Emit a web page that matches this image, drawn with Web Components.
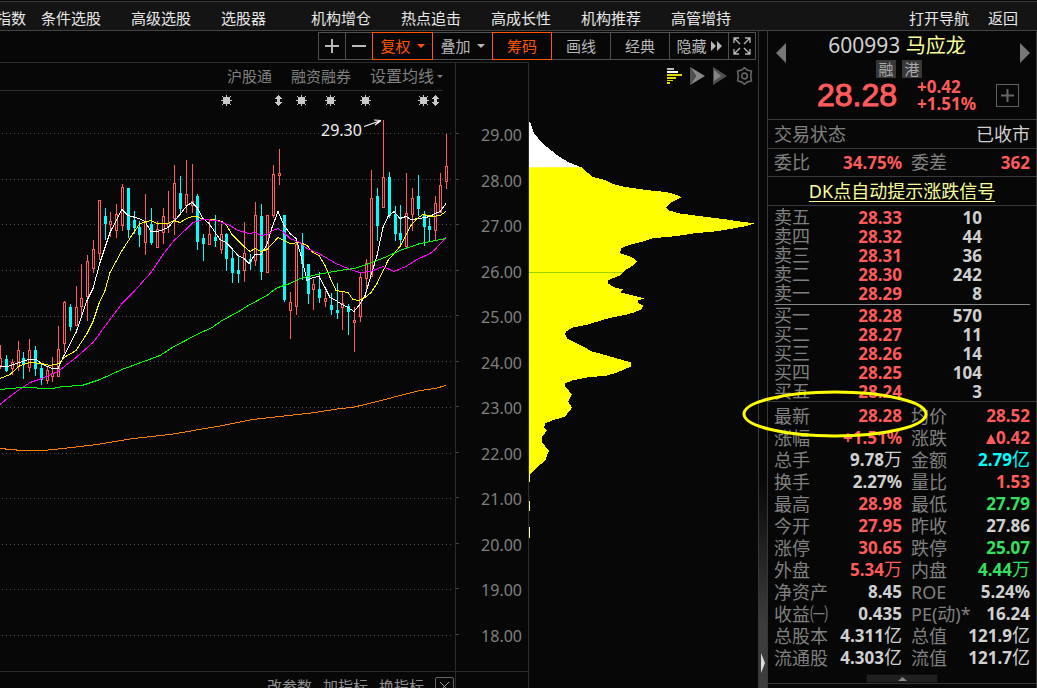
<!DOCTYPE html>
<html lang="zh-CN">
<head>
<meta charset="utf-8">
<title>600993 马应龙</title>
<style>
html, body { margin: 0; height: 100%; background: #070707; overflow: hidden; }
body { font-family: "Noto Sans", "Noto Sans CJK SC", sans-serif; font-size: 15px; color: #ccc; }
</style>
</head>
<body>
<stock-app></stock-app>
<script>
const BASE = `*{box-sizing:border-box} button{font:inherit;color:inherit;background:none;border:0;padding:0;margin:0;white-space:nowrap} a{color:inherit;text-decoration:none;white-space:nowrap} svg{display:block}`;
function define(tag, css, html) {
  customElements.define(tag, class extends HTMLElement {
    constructor() {
      super();
      const t = document.createElement('template');
      t.innerHTML = `<style>${BASE}${css}</style>${typeof html === 'function' ? html(this) : html}`;
      this.attachShadow({ mode: 'open' }).append(t.content.cloneNode(true));
    }
  });
}

/* ---------- top navigation ---------- */
define('top-nav', `
:host{display:block;border-top:1px solid #070707}
nav{display:flex;height:30px;border-top:1px solid #3a3a3a;border-bottom:1px solid #444;background:#141414;color:#e8e8e8;line-height:32px;overflow:hidden}
nav>a{flex:none;width:90px}
nav>a:first-child{width:41px;padding-right:15px;display:flex;justify-content:flex-end}
.end{margin-left:auto;display:flex;gap:19px;padding-right:19px}`,
`<nav><a href="#">指数</a>${['条件选股','高级选股','选股器','机构增仓','热点追击','高成长性','机构推荐','高管增持'].map(t => `<a href="#">${t}</a>`).join('')}<div class="end"><a href="#">打开导航</a><a href="#">返回</a></div></nav>`);

/* ---------- toolbar ---------- */
define('tool-button', `
:host{display:block;width:60px;height:28px;margin-left:-1px}
:host([small]){width:28px}
:host([wide]){width:61px}
button{width:100%;height:100%;border:1px solid #505050;display:flex;align-items:center;justify-content:center;gap:6px;line-height:24px;color:#b8b8b8}
:host([active]){position:relative;z-index:1}
:host([active]) button{border-color:#ff5500;color:#ff5500}`,
`<button type="button"><slot></slot></button>`);

const caret = `<svg width="8" height="4" viewBox="0 0 8 4"><path d="M0 0H8L4 4Z" fill="currentColor"/></svg>`;
define('tool-bar', `
:host{display:flex;justify-content:flex-end;height:31px;padding:1px 2px 0 0}`,
`<tool-button small><svg width="14" height="14" viewBox="0 0 14 14"><path d="M7 0V14M0 7H14" stroke="#b8b8b8" stroke-width="2"/></svg></tool-button>
<tool-button small><svg width="14" height="14" viewBox="0 0 14 14"><path d="M0 7H14" stroke="#b8b8b8" stroke-width="2"/></svg></tool-button>
<tool-button wide active>复权${caret}</tool-button><tool-button wide>叠加${caret}</tool-button>
<tool-button active>筹码</tool-button><tool-button>画线</tool-button><tool-button>经典</tool-button>
<tool-button>隐藏<svg width="11" height="10" viewBox="0 0 11 10" style="margin-left:-2px"><path d="M0 0L5 5L0 10ZM6 0L11 5L6 10Z" fill="#b8b8b8"/></svg></tool-button>
<tool-button small><svg width="18" height="18" viewBox="0 0 18 18" fill="none" stroke="#b8b8b8" stroke-width="1.3"><path d="M1 6V1H6M1 1L7 7M12 1H17V6M17 1L11 7M1 12V17H6M1 17L7 11M17 12V17H12M17 17L11 11"/></svg></tool-button>`);

/* ---------- candlestick chart ---------- */
/* high, body top, body bottom, low, 1 = rising */
const candles = `345,358,365,368,1;355,359,370,371,0;359,362,368,374,1;341,350,366,370,1;352,358,363,378,0;339,350,367,371,1;346,350,368,375,0;363,368,379,384,0;367,370,380,383,1;357,373,376,381,1;326,349,376,376,1;301,302,343,352,1;304,307,326,330,0;286,307,325,325,1;264,298,306,314,1;255,261,296,320,1;240,249,268,272,1;200,200,253,259,1;208,216,223,239,0;212,221,224,236,1;204,214,230,237,1;184,187,225,230,1;188,188,229,237,0;211,220,227,233,0;221,227,234,246,0;194,222,242,254,1;208,224,242,244,0;221,229,247,247,1;208,216,232,243,1;191,223,226,232,1;165,183,218,234,1;176,193,208,214,0;160,194,205,212,1;164,201,205,212,1;194,196,241,249,0;234,238,243,260,0;219,234,244,244,1;215,237,240,246,0;224,234,249,253,1;233,234,258,270,0;249,258,272,282,0;255,270,273,282,0;222,253,270,281,1;254,259,261,269,0;202,215,260,265,1;204,216,271,279,0;215,215,272,272,1;165,174,215,217,1;149,173,175,184,1;215,215,299,301,0;292,302,310,338,1;240,244,306,314,1;233,244,263,279,0;264,264,293,303,0;279,284,289,309,1;272,289,297,302,0;291,298,301,306,1;293,305,309,314,0;283,310,312,318,0;292,303,307,329,1;304,306,311,334,0;307,320,322,351,1;272,277,316,321,1;259,263,278,292,1;170,198,276,276,1;188,196,225,240,0;120,177,207,207,1;172,177,215,217,0;206,214,233,240,0;205,233,239,246,0;173,213,246,247,1;188,198,214,230,1;175,196,208,215,0;211,214,226,245,0;218,226,229,240,0;196,203,230,240,1;173,185,212,212,1;134,166,181,188,1`.split(';').map(s => s.split(',').map(Number));
const STEP = [0, 6, 12, 18, 23];
const candleSvg = candles.map(([h, t, b, l, up], i) => {
  const x = Math.floor(i / 5) * 29 + STEP[i % 5] - (i > 75 ? 1 : 0);
  return up
    ? `<path stroke="#ff5b5b" fill="none" d="M${x + .5} ${h}V${t}M${x + .5} ${b}V${l + 1}M${x - .5} ${t + .5}h2V${b + .5}h-2Z"/>`
    : `<path fill="#00ffff" d="M${x} ${h}h1V${l + 1}h-1ZM${x - 1} ${t}h3V${b + 1}h-3Z"/>`;
}).join('');
const averages = {
  '#ffffff': '0,366 7,366 20,362 28,359 36,359 43,364 52,368 58,368 63,357 76,332 87,300 93,288 100,262 110,232 122,209 128,215 139,218 145,221 151,231 158,231 168,227 180,214 187,205 192,202 197,207 203,218 209,223 220,239 226,242 232,248 238,255 244,258 249,263 255,254 261,254 267,244 272,227 278,211 284,225 290,233 296,238 301,255 307,280 313,277 319,276 325,287 330,297 336,300 342,304 348,307 354,311 359,305 365,295 371,275 377,255 383,227 388,216 394,211 400,218 406,216 411,219 420,218 430,216 435,213 440,211 446,203',
  '#ffff00': '0,378 10,374 20,365 30,362 42,363 50,365 59,363 64,357 76,350 87,333 93,321 99,303 105,290 110,272 122,250 133,233 140,223 151,220 157,223 168,223 174,220 180,222 187,218 192,216 197,216 203,219 213,219 222,221 226,224 232,234 244,246 250,251 255,248 261,251 267,249 278,237 290,243 300,242 307,245 313,252 319,255 325,265 330,277 336,290 348,292 353,299 359,300 365,297 371,292 377,283 388,260 400,246 411,225 417,218 423,214 433,216 440,215 446,211',
  '#ff00ff': '0,404 15,392 30,382 42,378 58,371 76,357 93,342 110,319 122,303 133,292 151,272 163,254 174,240 187,228 193,222 203,219 217,220 230,225 238,230 249,233 255,232 261,235 267,234 273,230 278,228 284,232 290,238 300,242 307,248 319,253 336,263 348,268 359,272 371,271 383,266 394,271 406,266 417,259 430,253 435,249 446,237',
  '#00ff00': '0,389 22,387 52,388 63,386 82,385 100,379 122,369 160,355 174,346 197,334 212,327 222,320 237,312 250,304 267,295 273,290 278,287 290,283 300,278 317,274 340,270 354,268 367,264 387,256 400,250 420,243 446,238',
  '#ff8000': '0,448 22,450 43,450 63,448 97,444 133,438 170,434 223,425 252,419 280,416 315,412 340,408 352,407 365,404 385,399 400,395 420,390 435,388 446,385'
};
const GRID = [133, 179, 224, 270, 316, 361, 407, 453, 498, 544, 589, 635];
const sun = x => `<path transform="translate(${x} 100)" d="M-3 -3H4V4H-3ZM0 -5H1V6H0ZM-5 0H6V1H-5ZM-4 -4h1v1h-1ZM4 -4h1v1h-1ZM-4 4h1v1h-1ZM4 4h1v1h-1Z"/>`;
const updown = x => `<path transform="translate(${x} 100)" d="M0 -5H1V-4H2V-3H3V-2H4V-1H2V2H4V3H3V4H2V5H1V6H0V5H-1V4H-2V3H-3V2H-1V-1H-3V-2H-2V-3H-1V-4H0Z"/>`;

define('k-chart', `
:host{display:flex;flex-direction:column;min-width:0;border-top:1px solid #2c2c2c;overflow:hidden}
header{display:flex;justify-content:flex-end;gap:19px;height:28px;margin-right:12px;border-bottom:1px solid #2c2c2c;line-height:27px;color:#808080}
header button{font-size:16px;display:flex;align-items:center;gap:3px}
.plot{flex:1;min-height:0;width:100%}
footer{display:flex;flex:none;justify-content:flex-end;gap:11px;height:17px;border-top:1px solid #2c2c2c;padding:3px 1px 0 0;color:#909090;line-height:22px}
footer button{height:22px}
.close{width:19px;height:19px;border:1px solid #666;border-radius:2px;margin-top:2px;display:grid;place-items:center}`,
`<header><a href="#">沪股通</a><a href="#">融资融券</a><button type="button">设置均线<svg width="6" height="3" viewBox="0 0 6 3"><path d="M0 0H6L3 3Z" fill="#808080"/></svg></button></header>
<svg class="plot" viewBox="0 91 455 580" preserveAspectRatio="xMaxYMin slice">
<g shape-rendering="crispEdges">
${GRID.map(y => `<path d="M2 ${y}.5H452" stroke="#505050" stroke-dasharray="1 3"/>`).join('')}
${candleSvg}
${Object.entries(averages).map(([c, p]) => `<polyline transform="translate(0 .5)" points="${p}" fill="none" stroke="${c}"/>`).join('')}
<g fill="#c8c8c8">${[226, 301, 330, 365, 423].map(sun).join('')}${[278, 435].map(updown).join('')}</g>
</g>
<text x="321" y="136" font-size="16" fill="#f0f0f0">29.30</text>
<path d="M364 126.5L381 120.5M381 120.5L374 120M381 120.5L375 125" stroke="#fff" stroke-width="1.2" fill="none"/>
</svg>
<footer><button type="button">改参数</button><button type="button">加指标</button><button type="button">换指标</button><button type="button" class="close" aria-label="关闭"><svg width="11" height="11" viewBox="0 0 11 11"><path d="M1 1L10 10M10 1L1 10" stroke="#999"/></svg></button></footer>`);

/* ---------- price axis ---------- */
define('price-axis', `
:host{display:flex;flex-direction:column;border:1px solid #2c2c2c;border-bottom:0;overflow:hidden}
ol{flex:1;min-height:0;margin:0;list-style:none;display:flex;flex-direction:column;justify-content:space-between;padding:62px 6px 25px 0;font-size:16px;line-height:20px;color:#808080;text-align:right}
li{position:relative}
li::before{content:"";position:absolute;left:0;top:8px;width:3px;height:1px;background:#444}
footer{height:17px;border-top:1px solid #2c2c2c}`,
`<ol>${Array.from({ length: 12 }, (_, i) => `<li>${29 - i}.00</li>`).join('')}</ol><footer></footer>`);

/* ---------- chip distribution ---------- */
const profile = '1,123 5,134 9,139 18,148 28,156 39,163 52,168 55,170 59,174 64,178 76,181 84,185 97,188 119,191 138,193 148,196 152,198 142,203 137,208 139,211 149,214 171,217 196,220 208,222 225,224 216,227 188,232 166,234 146,237 124,239 111,243 99,246 92,249 91,254 103,258 108,262 104,266 96,271 91,276 79,281 79,284 85,288 94,290 91,293 103,296 115,299 109,301 109,304 114,306 112,310 105,313 98,315 79,319 59,325 44,328 37,332 36,335 38,339 50,345 63,352 81,357 102,363 102,367 88,373 78,376 58,378 43,381 36,384 36,387 43,395 39,402 43,408 36,417 23,421 16,424 15,428 18,431 13,437 13,443 20,451 18,455 17,460 9,467 1,475';
define('chip-panel', `
:host{display:flex;flex-direction:column;overflow:hidden}
.tools{display:flex;justify-content:flex-end;align-items:center;gap:8px;height:27px;padding-right:4px}
.plot{flex:1;min-height:0;width:100%}`,
`<div class="tools">
<button type="button" aria-label="筹码分布"><svg width="15" height="16" viewBox="0 0 15 16"><path d="M0 0H7V2H0Z" fill="#bbb"/><path d="M0 3H11V5H0Z" fill="#fff"/><path d="M0 6H15V8H0ZM0 9H9V11H0ZM0 12H6V13H0ZM0 14H3V16H0Z" fill="#e0d800"/></svg></button>
<button type="button" aria-label="远期成本"><svg width="15" height="18" viewBox="0 0 15 18"><path d="M0 0L15 9L0 18L6 9Z" fill="#888"/><path d="M0 0L6 9L0 18Z" fill="#505050"/></svg></button>
<button type="button" aria-label="近期成本"><svg width="14" height="18" viewBox="0 0 14 18"><path d="M0 0L14 9L0 18Z" fill="#505050"/><path d="M1 3L8 9L1 14Z" fill="#858585"/></svg></button>
<button type="button" aria-label="设置"><svg width="19" height="20" viewBox="0 0 20 20" fill="none" stroke="#666" stroke-width="1.7"><path d="M10 1.3L13 3.8L17.3 4.8L16.5 10L17.3 15.2L13 16.2L10 18.7L7 16.2L2.7 15.2L3.5 10L2.7 4.8L7 3.8Z" stroke-linejoin="round"/><circle cx="10" cy="10" r="3"/></svg></button></div>
<svg class="plot" viewBox="0 90 229 598" preserveAspectRatio="xMinYMin slice"><g shape-rendering="crispEdges">
<clipPath id="above"><path d="M0 90H229V168H0Z"/></clipPath>
<polygon points="0,123 ${profile} 0,475" fill="#ffff00"/>
<polygon points="0,123 ${profile} 0,475" fill="#ffffff" clip-path="url(#above)"/>
<path d="M0 273.5H94" stroke="#9ad000"/>
<path d="M.5 475V482M.5 501V511M.5 527V538" stroke="#ffffa0"/></g></svg>`);

/* ---------- splitter ---------- */
define('split-bar', `
:host{display:flex;flex-direction:column;justify-content:flex-end;align-items:center;padding-bottom:15px;border:1px solid #383838;border-width:0 1px;background:linear-gradient(#070707 68%,#3c3c3c 90%)}`,
`<svg width="4" height="20" viewBox="0 0 4 20"><path d="M0 0L4 10L0 20Z" fill="#ddd"/></svg>`);

/* ---------- quote panel ---------- */
define('quote-head', `
:host{display:grid;grid-template-columns:24px 1fr 16px;height:89px;border-bottom:1px solid #383838;padding:0 0 0 2px}
.prev{align-self:start;padding:12px 0 0 6px}.next{align-self:start;padding:12px 0 0}
.mid{display:grid;grid-template-rows:29px 18px 34px;justify-items:center}
h1{margin:0 6px 0 0;padding-right:14px;font-weight:400;font-size:21px;line-height:29px;color:#d0d0d0;white-space:nowrap}
h1 b{font-weight:400;font-size:20px;line-height:20px;color:#f8ff9a}
.tags{display:flex;gap:6px;margin-right:16px}
.tags span{width:20px;height:18px;background:#383838;color:#aaa;text-align:center;line-height:18px}
.price{display:grid;grid-template-columns:auto auto 23px;align-items:center;column-gap:20px;line-height:17px;color:#ff5b5b;white-space:nowrap;margin-left:22px}
.price strong{font:400 32px/34px "Liberation Sans",sans-serif;-webkit-text-stroke:1px #ff5b5b}
.price div{font-weight:700;font-size:17px}
.price button{width:23px;height:23px;border:1px solid #606060;display:grid;place-items:center}`,
`<button type="button" class="prev" aria-label="上一只"><svg width="10" height="20" viewBox="0 0 10 20"><path d="M10 0V20L0 10Z" fill="#777"/></svg></button>
<div class="mid"><h1>600993 <b>马应龙</b></h1><div class="tags"><span>融</span><span>港</span></div>
<div class="price"><strong>28.28</strong><div>+0.42<br>+1.51%</div><button type="button" aria-label="加自选"><svg width="13" height="13" viewBox="0 0 13 13"><path d="M6.5 0V13M0 6.5H13" stroke="#666" stroke-width="2"/></svg></button></div></div>
<button type="button" class="next" aria-label="下一只"><svg width="10" height="20" viewBox="0 0 10 20"><path d="M0 0V20L10 10Z" fill="#777"/></svg></button>`);

define('order-book', `
:host{display:block;padding:2px 6px 0;border-bottom:1px solid #383838}
table{width:100%;border-collapse:collapse;table-layout:fixed;font-size:17px}
th,td{padding:0;height:19px;line-height:19px}
th{font-weight:400;font-size:18px;color:#808080;text-align:left;width:64px}
td{font-weight:700;text-align:right}
.p{width:64px;color:#ff5b5b}.v{width:80px;color:#d0d0d0}
hr{border:0;height:1px;background:#888;margin:1px 0}`,
() => {
  const rows = a => `<table>${a.map(([n, p, v]) => `<tr><th scope="row">${n}</th><td class="p">${p}</td><td class="v">${v}</td><td></td></tr>`).join('')}</table>`;
  return rows([['卖五','28.33',10],['卖四','28.32',44],['卖三','28.31',36],['卖二','28.30',242],['卖一','28.29',8]]) + '<hr>' +
    rows([['买一','28.28',570],['买二','28.27',11],['买三','28.26',14],['买四','28.25',104],['买五','28.24',3]]);
});

define('quote-details', `
:host{display:block;padding:3px 6px 0}
table{width:100%;border-collapse:collapse;table-layout:fixed;font-size:17px}
th,td{padding:0;height:22px;line-height:22px;white-space:nowrap}
th{font-weight:400;font-size:18px;color:#808080;text-align:left}
td{font-weight:700;text-align:right}
.a{width:58px}.b{width:70px}.c{width:63px;padding-left:9px}
i{font-style:normal;font-weight:400;font-size:18px;line-height:18px}
th,td{line-height:20px}
.r{color:#ff5b5b}.g{color:#35e060}.c1{color:#00ffff}.w{color:#d0d0d0}
svg{display:inline-block}`,
() => {
  const up = '<svg width="10" height="10" viewBox="0 0 10 10"><path d="M5 0L10 10H0Z" fill="#ff5b5b"/></svg>';
  return `<table>${[
    ['最新','28.28','r','均价','28.52','r'],['涨幅','+1.51%','r','涨跌',up + '0.42','r'],
    ['总手','9.78<i>万</i>','w','金额','2.79<i>亿</i>','c1'],['换手','2.27%','w','量比','1.53','r'],
    ['最高','28.98','r','最低','27.79','g'],['今开','27.95','r','昨收','27.86','w'],
    ['涨停','30.65','r','跌停','25.07','g'],['外盘','5.34<i>万</i>','r','内盘','4.44<i>万</i>','g'],
    ['净资产','8.45','w','ROE','5.24%','w'],['收益㈠','0.435','w','PE(动)*','16.24','w'],
    ['总股本','4.311<i>亿</i>','w','总值','121.9<i>亿</i>','w'],['流通股','4.303<i>亿</i>','w','流值','121.7<i>亿</i>','w']
  ].map(r => `<tr><th scope="row" class="a">${r[0]}</th><td class="b ${r[2]}">${r[1]}</td><th scope="row" class="c">${r[3]}</th><td class="${r[5]}">${r[4]}</td></tr>`).join('')}</table>`;
});

define('quote-panel', `
:host{display:block;position:relative;border-right:1px solid #383838}
.row{display:flex;align-items:center;padding:0 6px;border-bottom:1px solid #383838;height:29px;font-size:18px;color:#808080;line-height:28px}
.row span{margin-left:auto;color:#d0d0d0}
.ratio{height:28px;line-height:27px}
.ratio b{font-size:17px;color:#ff5b5b;width:92px;text-align:right}
.ratio em{font-style:normal;margin-left:9px;flex:1}
.ratio b:last-child{width:auto}
.link{justify-content:center;color:#f8ff9a}
.link a{text-decoration:underline;text-underline-offset:3px;text-decoration-thickness:1px}
.fold{display:block;width:72px;height:9px;margin:5px auto 0;background:#202020;border:1px solid #101010}
.fold svg{margin:auto}
.end{border-bottom:1px solid #383838}
.mark{position:absolute;right:108px;top:359px;pointer-events:none}`,
`<quote-head></quote-head>
<div class="row">交易状态<span>已收市</span></div>
<div class="row ratio">委比<b>34.75%</b><em>委差</em><b>362</b></div>
<div class="row link"><a href="#">DK点自动提示涨跌信号</a></div>
<order-book></order-book><quote-details></quote-details>
<div class="end"><button type="button" class="fold" aria-label="收起"><svg width="9" height="4" viewBox="0 0 9 4"><path d="M4.5 0L9 4H0Z" fill="#888"/></svg></button></div>
<svg class="mark" width="186" height="48" viewBox="0 0 186 48"><ellipse cx="93" cy="24" rx="91" ry="22" fill="none" stroke="#ffff00" stroke-width="3"/></svg>`);

/* ---------- application frame ---------- */
define('stock-app', `
:host{display:grid;grid-template-rows:auto 1fr;height:100vh}
main{display:grid;grid-template-columns:1fr 10px 269px;min-height:0}
section{display:grid;grid-template-rows:31px 1fr;min-width:0;min-height:0}
.charts{display:grid;grid-template-columns:1fr 74px 229px;min-height:0}
.charts>*{min-height:0}`,
`<top-nav></top-nav><main><section><tool-bar></tool-bar><div class="charts"><k-chart></k-chart><price-axis></price-axis><chip-panel></chip-panel></div></section><split-bar></split-bar><quote-panel></quote-panel></main>`);
</script>
</body>
</html>
